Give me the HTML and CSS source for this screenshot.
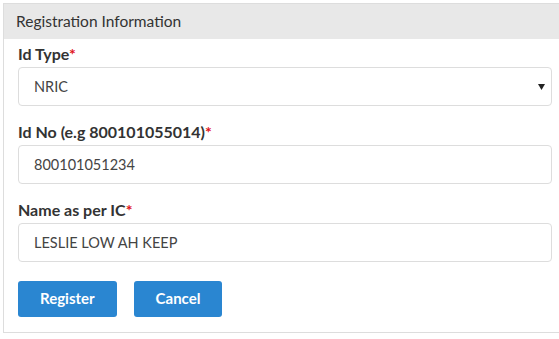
FILE: index.html
```html
<!DOCTYPE html>
<html lang="en">
<head>
    <meta charset="UTF-8">
    <meta name="viewport" content="width=device-width, initial-scale=1.0">
    <title>Registration</title>
    <link rel="stylesheet" href="styles.css">
</head>
<body>
    <div class="panel">
        <div class="panel-heading">Registration Information</div>
        <form class="panel-body">
            <div class="form-group">
                <label for="idType">Id Type<span class="req">*</span></label>
                <div class="select-wrap">
                    <select id="idType" class="form-control">
                        <option>NRIC</option>
                        <option>Passport</option>
                    </select>
                    <svg class="caret" width="7" height="6" viewBox="0 0 7 6"><path d="M0 0H7L3.5 6Z" fill="#222"/></svg>
                </div>
            </div>

            <div class="form-group">
                <label for="idNo">Id No (e.g 800101055014)<span class="req">*</span></label>
                <input id="idNo" class="form-control" type="text" value="800101051234">
            </div>

            <div class="form-group">
                <label for="fullName">Name as per IC<span class="req">*</span></label>
                <input id="fullName" class="form-control" type="text" value="LESLIE LOW AH KEEP">
            </div>

            <div class="actions">
                <button type="button" class="btn">Register</button>
                <button type="button" class="btn">Cancel</button>
            </div>
        </form>
    </div>
</body>
</html>
```

FILE: styles.css
```css
/* General Styles */
body {
    margin: 0;
    padding: 3px 0 0 3px;
    font-family: Lato, 'Open Sans', sans-serif;
    font-size: 14px;
    color: #333;
    background: #fff;
    overflow: hidden;
}

/* Panel */
.panel {
    width: 580px;
    border: 1px solid #ddd;
    background: #fff;
}

.panel-heading {
    height: 35px;
    line-height: 34px;
    padding-left: 12px;
    background-color: #e8e8e8;
    color: #333;
    font-size: 15.5px;
}

.panel-body {
    padding: 5px 0 15px 14px;
    width: 534px;
}

/* Form fields */
.form-group {
    margin-bottom: 16px;
}

label {
    display: block;
    font-size: 16px;
    font-weight: bold;
    line-height: 20px;
    margin-bottom: 3px;
    color: #333;
}

.req {
    color: #e0121b;
}

.form-control {
    display: block;
    box-sizing: border-box;
    width: 100%;
    height: 39px;
    padding: 0 15px;
    border: 1px solid #ddd;
    border-radius: 4px;
    background: #fff;
    font-family: Lato, 'Open Sans', sans-serif;
    font-size: 14.5px;
    color: #444;
    outline: none;
}

select.form-control {
    -webkit-appearance: none;
    appearance: none;
}

.select-wrap {
    position: relative;
}

.caret {
    position: absolute;
    right: 7px;
    top: 17px;
    pointer-events: none;
}

/* Buttons */
.actions {
    display: flex;
    gap: 17px;
    padding-top: 3px;
}

.btn {
    height: 36px;
    padding: 0 22px 2px;
    border: none;
    border-radius: 3px;
    background-color: #2a86d1;
    color: #fff;
    font-family: Lato, 'Open Sans', sans-serif;
    font-size: 15px;
    font-weight: bold;
    cursor: pointer;
}

.btn:hover {
    background-color: #1f73b7;
}
```
